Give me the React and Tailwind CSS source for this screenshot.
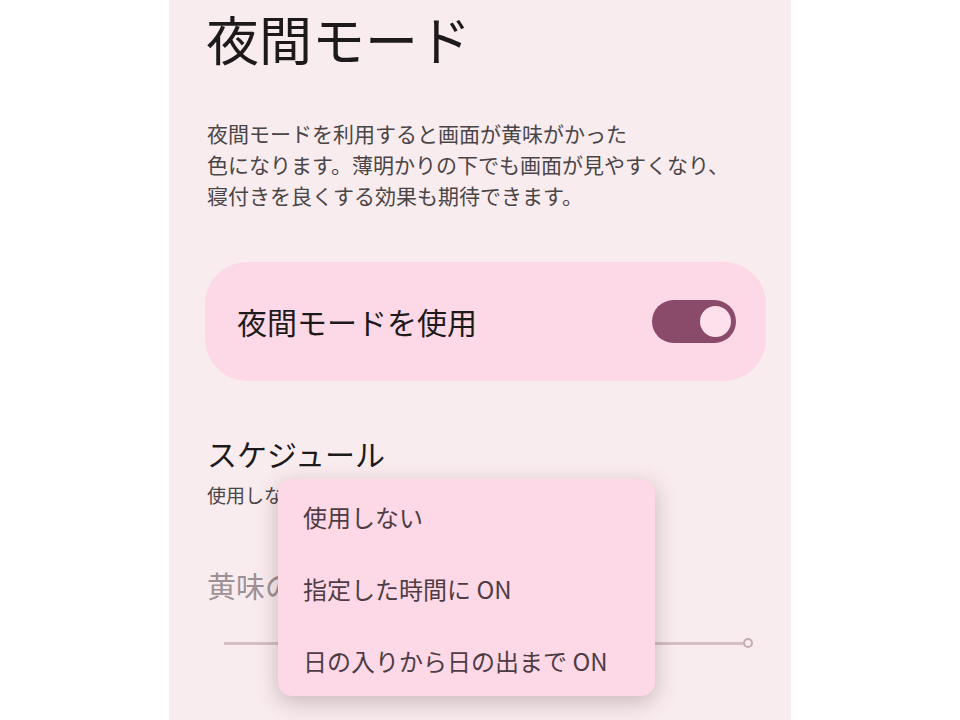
const font = { fontFamily: '"Noto Sans CJK JP", "Noto Sans", sans-serif' };

const MenuItem = ({ label }) => (
  <div className="h-[72px] flex items-center pl-[25px] text-[24px] text-[#4d3c44]">{label}</div>
);

const App = () => {
  return (
    <div className="w-[960px] h-[720px] bg-white flex justify-center overflow-hidden" style={font}>
      <div className="relative w-[622px] h-[720px] bg-[#f9ecee] overflow-hidden">
        <h1 className="pl-[37px] text-[53px] leading-[77px] text-[#1d1a1c] font-normal">夜間モード</h1>

        <div className="mt-[41px] pl-[38px] text-[21px] leading-[31px] text-[#4a4547]">
          <p>夜間モードを利用すると画面が黄味がかった</p>
          <p>色になります。薄明かりの下でも画面が見やすくなり、</p>
          <p>寝付きを良くする効果も期待できます。</p>
        </div>

        <div className="mt-[51px] ml-[36px] mr-[25px] h-[119px] rounded-[42px] bg-[#fdd8e6] flex items-center justify-between pl-[32px] pr-[30px]">
          <span className="text-[30px] text-[#1d1a1c]">夜間モードを使用</span>
          <div className="w-[84px] h-[43px] rounded-full bg-[#8a4a69] flex items-center justify-end pr-[5px]">
            <div className="w-[31px] h-[31px] rounded-full bg-[#fde0ec]" />
          </div>
        </div>

        <div className="mt-[52px] pl-[38px] text-[30px] leading-[40px] text-[#1d1a1c]">スケジュール</div>
        <div className="mt-[8px] pl-[38px] text-[19px] leading-[28px] text-[#4a4547]">使用しない</div>

        <div className="mt-[56px] pl-[38px] text-[29px] leading-[40px] text-[#9d9195]">黄味の強さ</div>

        <div className="mt-[33px] ml-[55px] mr-[38px] h-[10px] flex items-center">
          <div className="flex-1 h-[3px] bg-[#d3bec6]" />
          <div className="w-[10px] h-[10px] rounded-full border-[2px] border-[#c0adb4]" />
        </div>

        <div className="absolute left-[109px] top-[479px] w-[377px] h-[217px] rounded-[14px] bg-[#fdd8e6] pt-[2px] shadow-[0_6px_22px_rgba(80,40,55,0.28)]">
          <MenuItem label="使用しない" />
          <MenuItem label="指定した時間に ON" />
          <MenuItem label="日の入りから日の出まで ON" />
        </div>
      </div>
    </div>
  );
};

export default App;
